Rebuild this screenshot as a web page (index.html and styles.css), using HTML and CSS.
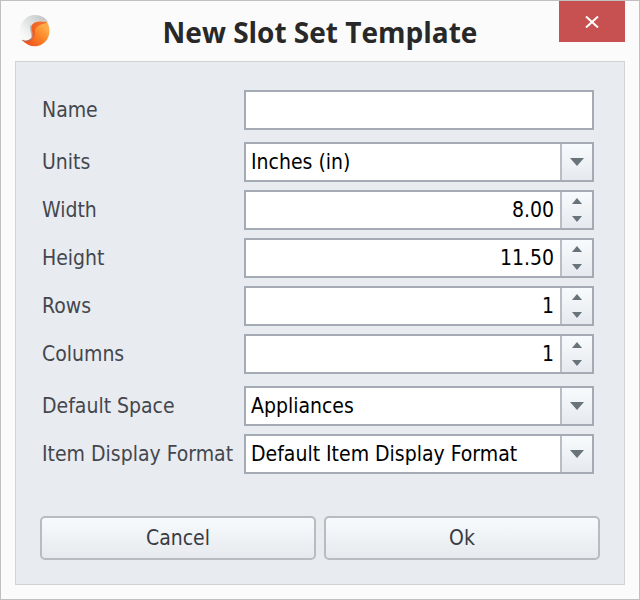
FILE: index.html
```html
<!DOCTYPE html>
<html lang="en">
<head>
<meta charset="utf-8">
<title>New Slot Set Template</title>
<link rel="stylesheet" href="styles.css">
</head>
<body>
<main class="window">
  <header class="titlebar">
    <svg class="logo" viewBox="0 0 32 32" aria-hidden="true">
      <defs>
        <linearGradient id="silver" x1="0" y1="0.6" x2="0.7" y2="0">
          <stop offset="0" stop-color="#f8f8f8"/>
          <stop offset="0.6" stop-color="#dcdfdf"/>
          <stop offset="1" stop-color="#c6caca"/>
        </linearGradient>
        <linearGradient id="flame" x1="0.9" y1="0.3" x2="0.2" y2="1">
          <stop offset="0" stop-color="#fdaa48"/>
          <stop offset="0.4" stop-color="#fb8426"/>
          <stop offset="1" stop-color="#ee4f1e"/>
        </linearGradient>
        <linearGradient id="rim" x1="0" y1="0" x2="1" y2="0">
          <stop offset="0" stop-color="#b9bcbc" stop-opacity="0"/>
          <stop offset="1" stop-color="#a9acac"/>
        </linearGradient>
      </defs>
      <path fill="url(#silver)" d="M1 14C2 6 8 0 16 0c6 0 11 3 13 7-7-1-15-1-16 4-1 4 1 6 1 10 0 4-3 6-7 5C3 24 0 20 1 14z"/>
      <path fill="none" stroke="url(#rim)" stroke-width="1.5" d="M6 26c6 0 8-3 7-7-1-3-2-6-1-9"/>
      <path fill="url(#flame)" d="M28 7c4 7 3 15-2 20-6 6-16 6-23-2 5 3 10 1 11-3 1-5-3-7-1-12 2-4 9-4 15-3z"/>
      <path fill="#e64a1e" d="M13 10c2-4 9-4 15-3-2 2-6 2-9 4-3 2-3 4-3 7 0 4-3 8-5 9-3 1-6 0-8-2 4 2 9 0 10-3 1-5-2-7 0-12z" opacity="0.6"/>
      <path fill="none" stroke="#8e5b4a" stroke-width="1" opacity="0.7" d="M3 25c3 2 7 1 9-1"/>
    </svg>
    <h1 class="title">New Slot Set Template</h1>
    <button class="close" type="button" aria-label="Close">
      <svg class="close-icon" viewBox="0 0 14 12" aria-hidden="true"><path d="M1 0.5L13 11.5M13 0.5L1 11.5"/></svg>
    </button>
  </header>

  <form class="panel">
    <div class="fields">
      <div class="group">
        <div class="row">
          <label for="name">Name</label>
          <div class="control"><input id="name" type="text"></div>
        </div>
      </div>

      <div class="group">
        <div class="row">
          <label for="units">Units</label>
          <div class="control combo">
            <select id="units"><option>Inches (in)</option></select>
            <span class="drop"><svg viewBox="0 0 14 8" aria-hidden="true"><path d="M0 0h14L7 8z"/></svg></span>
          </div>
        </div>
        <div class="row">
          <label for="width">Width</label>
          <div class="control spin">
            <input id="width" type="text" inputmode="decimal" value="8.00">
            <div class="steps">
              <button type="button" aria-label="Increase width"><svg viewBox="0 0 10 6"><path d="M0 6h10L5 0z"/></svg></button>
              <button type="button" aria-label="Decrease width"><svg viewBox="0 0 10 6"><path d="M0 0h10L5 6z"/></svg></button>
            </div>
          </div>
        </div>
        <div class="row">
          <label for="height">Height</label>
          <div class="control spin">
            <input id="height" type="text" inputmode="decimal" value="11.50">
            <div class="steps">
              <button type="button" aria-label="Increase height"><svg viewBox="0 0 10 6"><path d="M0 6h10L5 0z"/></svg></button>
              <button type="button" aria-label="Decrease height"><svg viewBox="0 0 10 6"><path d="M0 0h10L5 6z"/></svg></button>
            </div>
          </div>
        </div>
        <div class="row">
          <label for="rows">Rows</label>
          <div class="control spin">
            <input id="rows" type="text" inputmode="numeric" value="1">
            <div class="steps">
              <button type="button" aria-label="Increase rows"><svg viewBox="0 0 10 6"><path d="M0 6h10L5 0z"/></svg></button>
              <button type="button" aria-label="Decrease rows"><svg viewBox="0 0 10 6"><path d="M0 0h10L5 6z"/></svg></button>
            </div>
          </div>
        </div>
        <div class="row">
          <label for="columns">Columns</label>
          <div class="control spin">
            <input id="columns" type="text" inputmode="numeric" value="1">
            <div class="steps">
              <button type="button" aria-label="Increase columns"><svg viewBox="0 0 10 6"><path d="M0 6h10L5 0z"/></svg></button>
              <button type="button" aria-label="Decrease columns"><svg viewBox="0 0 10 6"><path d="M0 0h10L5 6z"/></svg></button>
            </div>
          </div>
        </div>
      </div>

      <div class="group">
        <div class="row">
          <label for="space">Default Space</label>
          <div class="control combo">
            <select id="space"><option>Appliances</option></select>
            <span class="drop"><svg viewBox="0 0 14 8" aria-hidden="true"><path d="M0 0h14L7 8z"/></svg></span>
          </div>
        </div>
        <div class="row">
          <label for="format">Item Display Format</label>
          <div class="control combo">
            <select id="format"><option>Default Item Display Format</option></select>
            <span class="drop"><svg viewBox="0 0 14 8" aria-hidden="true"><path d="M0 0h14L7 8z"/></svg></span>
          </div>
        </div>
      </div>
    </div>

    <div class="actions">
      <button class="action" type="button">Cancel</button>
      <button class="action" type="submit">Ok</button>
    </div>
  </form>
</main>
</body>
</html>
```

FILE: styles.css
```css
* {
  box-sizing: border-box;
}

body {
  margin: 0;
  font-family: Tahoma, "DejaVu Sans Condensed", "Noto Sans", sans-serif;
  font-size: 21px;
  color: #44474d;
}

button,
input,
select {
  font: inherit;
  margin: 0;
}

.window {
  display: flex;
  flex-direction: column;
  min-height: 100vh;
  padding: 0 14px 14px;
  border: 1px solid #c0c0c0;
  background: #fbfbfb;
}

.titlebar {
  display: grid;
  grid-template-columns: 1fr auto 1fr;
  height: 60px;
}

.logo {
  width: 32px;
  height: 32px;
  margin: 14px 0 0 4px;
}

.title {
  margin: 0;
  font-family: "Open Sans", "Noto Sans", sans-serif;
  font-size: 28px;
  line-height: 62px;
  font-weight: 700;
  color: #282828;
  white-space: nowrap;
}

.close {
  display: flex;
  align-items: center;
  justify-content: center;
  justify-self: end;
  width: 66px;
  height: 41px;
  padding: 0;
  border: 0;
  background: #c75050;
}

.close-icon {
  width: 14px;
  height: 12px;
  fill: none;
  stroke: #fff;
  stroke-width: 2;
}

.panel {
  flex: 1;
  padding: 28px 24px 24px;
  border: 1px solid #d0d2d5;
  background: #e8ebf0;
}

.fields {
  display: flex;
  flex-direction: column;
  gap: 12px;
  padding: 0 6px 0 2px;
}

.group {
  display: flex;
  flex-direction: column;
  gap: 8px;
}

.row {
  display: grid;
  grid-template-columns: 202px 1fr;
  align-items: center;
}

.row label {
  white-space: nowrap;
}

.control {
  display: flex;
  height: 40px;
  border: 2px solid #a4abb5;
  background: #fff;
}

.control input,
.control select {
  flex: 1;
  min-width: 0;
  width: 100%;
  padding: 0 5px;
  border: 0;
  background: transparent;
  color: #000;
  appearance: none;
}

.spin input {
  padding-right: 6px;
  text-align: right;
}

.drop,
.steps {
  flex: none;
  display: flex;
  width: 32px;
  border-left: 2px solid #b9bec6;
  background: linear-gradient(#f7fbfe, #e6eaee);
}

.drop {
  align-items: center;
  justify-content: center;
  pointer-events: none;
}

.drop svg {
  width: 14px;
  height: 8px;
  fill: #69737a;
}

.steps {
  flex-direction: column;
}

.steps button {
  flex: 1;
  display: flex;
  align-items: center;
  justify-content: center;
  padding: 0;
  border: 0;
  background: transparent;
}

.steps svg {
  width: 10px;
  height: 6px;
  fill: #69737a;
}

.actions {
  display: grid;
  grid-template-columns: 1fr 1fr;
  gap: 8px;
  margin-top: 42px;
}

.action {
  height: 44px;
  padding: 0;
  border: 2px solid #b7bcc1;
  border-radius: 5px;
  background: linear-gradient(#f7fbfe, #e6eaee);
  color: #393c42;
}
```
